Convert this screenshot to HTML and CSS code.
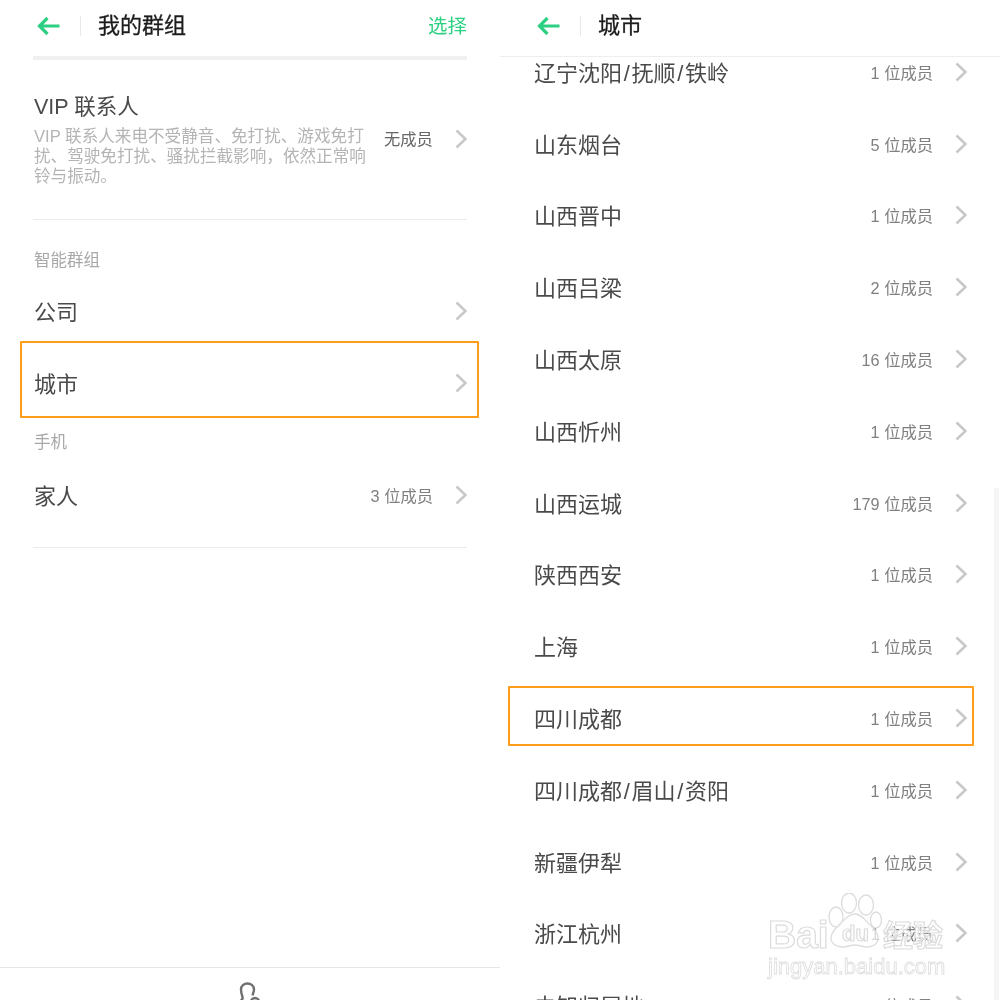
FILE: index.html
```html
<!DOCTYPE html>
<html lang="zh-CN">
<head>
    <meta charset="UTF-8">
    <title>我的群组</title>
    <link rel="stylesheet" href="styles.css">
</head>
<body>
    <div class="page">
        <!-- Left screen: group list -->
        <section class="screen">
            <header class="topbar">
                <svg class="back" viewBox="0 0 24 20"><path d="M22.5 10H3M10.5 2L2.5 10l8 8"/></svg>
                <span class="topbar-line"></span>
                <h1>我的群组</h1>
                <span class="select">选择</span>
            </header>
            <div class="thick-rule"></div>

            <div class="vip">
                <div class="vip-text">
                    <div class="vip-title">VIP 联系人</div>
                    <p>VIP 联系人来电不受静音、免打扰、游戏免打扰、驾驶免打扰、骚扰拦截影响，依然正常响铃与振动。</p>
                </div>
                <span class="count">无成员</span>
                <svg class="chev" viewBox="0 0 12 20"><path d="M1.5 1.5L10.5 10l-9 8.5"/></svg>
            </div>
            <div class="rule"></div>

            <div class="label label-first">智能群组</div>
            <div class="row"><span class="name">公司</span><svg class="chev" viewBox="0 0 12 20"><path d="M1.5 1.5L10.5 10l-9 8.5"/></svg></div>
            <div class="row"><span class="name">城市</span><svg class="chev" viewBox="0 0 12 20"><path d="M1.5 1.5L10.5 10l-9 8.5"/></svg></div>
            <div class="label label-second">手机</div>
            <div class="row"><span class="name">家人</span><span class="count">3 位成员</span><svg class="chev" viewBox="0 0 12 20"><path d="M1.5 1.5L10.5 10l-9 8.5"/></svg></div>
            <div class="rule rule-end"></div>

            <footer class="bottombar">
                <svg class="group-icon" viewBox="0 0 28 22"><path d="M2 20c3-1 5-3 4.500-5C5.500 12 5 9.500 5 7.500 5 4 8 1.500 11.500 1.500S18 4 18 7.500c0 2-.8 3.500-1.500 6"/><circle cx="19" cy="20" r="4"/><circle cx="19" cy="20" r="1"/></svg>
            </footer>
            <div class="mark mark-left"></div>
        </section>

        <!-- Right screen: cities -->
        <section class="screen">
            <header class="topbar topbar-over">
                <svg class="back" viewBox="0 0 24 20"><path d="M22.5 10H3M10.5 2L2.5 10l8 8"/></svg>
                <span class="topbar-line"></span>
                <h1>城市</h1>
            </header>
            <div class="city-list" id="cityList"></div>
            <div class="scrollbar"></div>
            <div class="mark mark-right"></div>
            <div class="watermark">
                <span class="wm-bai">Bai</span>
                <svg class="wm-paw" viewBox="0 0 55 56">
                    <ellipse cx="9" cy="24" rx="7" ry="10"/>
                    <ellipse cx="22" cy="10" rx="7.500" ry="10"/>
                    <ellipse cx="39" cy="12" rx="7.500" ry="10"/>
                    <ellipse cx="49" cy="27" rx="5.500" ry="8"/>
                    <path d="M28 21c6 0 9 5 14 10 6 5 9 10 9 14 0 6-5 9-11 9-4 0-8-2-12-2s-8 2-12 2c-6 0-12-3-12-9 0-5 4-9 9-14 5-5 9-10 15-10z"/>
                </svg>
                <span class="wm-du">du</span>
                <span class="wm-cn">经验</span>
                <span class="wm-url">jingyan.baidu.com</span>
            </div>
        </section>
    </div>

    <script>
        // City rows
        const cities = [
            ['辽宁沈阳/抚顺/铁岭', 1], ['山东烟台', 5], ['山西晋中', 1], ['山西吕梁', 2],
            ['山西太原', 16], ['山西忻州', 1], ['山西运城', 179], ['陕西西安', 1],
            ['上海', 1], ['四川成都', 1], ['四川成都/眉山/资阳', 1], ['新疆伊犁', 1],
            ['浙江杭州', 1], ['未知归属地', 1]
        ];
        const list = document.getElementById('cityList');
        cities.forEach(city => {
            const name = city[0].replace(/\//g, '<span class="slash">/</span>');
            const row = document.createElement('div');
            row.classList.add('city-row');
            row.innerHTML = `
                <span class="name">${name}</span>
                <span class="count">${city[1]} 位成员</span>
                <svg class="chev" viewBox="0 0 12 20"><path d="M1.5 1.5L10.5 10l-9 8.5"/></svg>
            `;
            list.appendChild(row);
        });
    </script>
</body>
</html>
```

FILE: styles.css
```css
* {
    box-sizing: border-box;
}

body {
    margin: 0;
    background-color: #fff;
    font-family: "Liberation Sans", "Noto Sans CJK SC", sans-serif;
    color: #4a4a4a;
}

.page {
    display: flex;
    width: 1000px;
    height: 1000px;
    overflow: hidden;
    filter: blur(0.35px);
}

.screen {
    position: relative;
    width: 500px;
    height: 1000px;
    overflow: hidden;
    padding: 0 33px;
}

/* Top bar */
.topbar {
    display: flex;
    align-items: center;
    height: 52px;
}

.topbar-over {
    position: relative;
    z-index: 2;
    height: 57px;
    margin: 0 -33px;
    padding: 0 33px 5px;
    background-color: #fff;
    border-bottom: 1px solid #eee;
}

.back {
    width: 24px;
    height: 20px;
    margin-left: 4px;
    fill: none;
    stroke: #2dd082;
    stroke-width: 3.2;
}

.topbar-line {
    width: 1px;
    height: 20px;
    margin: 0 17px 0 19px;
    background-color: #e8e8e8;
}

h1 {
    margin: 0 0 6px;
    font-size: 22px;
    font-weight: 400;
    color: #1c1c1c;
    -webkit-text-stroke: 0.3px #1c1c1c;
}

.select {
    margin-left: auto;
    padding-bottom: 4px;
    font-size: 19.5px;
    color: #2dd082;
}

.thick-rule {
    height: 4px;
    margin-top: 4px;
    background-color: #f0f0f0;
}

.rule {
    height: 1px;
    background-color: #ececec;
}

.rule-end {
    margin-top: 15px;
}

/* VIP block */
.vip {
    display: flex;
    align-items: center;
    height: 159px;
}

.vip-text {
    width: 338px;
    margin: 0 12px 0 1px;
}

.vip-title {
    font-size: 21.5px;
    line-height: 30px;
    margin-bottom: 5px;
}

.vip p {
    margin: 0;
    font-size: 16.6px;
    line-height: 19.7px;
    color: #b4b4b4;
}

.label {
    margin-left: 1px;
    font-size: 16.5px;
    line-height: 20px;
    color: #a8a8a8;
}

.label-first {
    margin-top: 30px;
    margin-bottom: 6px;
}

.label-second {
    margin-top: 12px;
    margin-bottom: 8px;
}

/* Rows */
.row,
.city-row {
    display: flex;
    align-items: center;
    height: 72px;
    font-size: 22px;
}

.name {
    margin-left: 1px;
    padding-bottom: 4px;
}

.slash {
    display: inline-block;
    width: 9.5px;
    text-align: center;
}

.city-list {
    margin-top: -20px;
}

.city-row {
    height: 71.8px;
}

.count {
    margin-left: auto;
    padding-bottom: 2px;
    font-size: 16.3px;
    color: #808080;
}

.vip .count {
    margin-left: 0;
    padding-bottom: 4px;
    color: #666;
}

.chev {
    flex: none;
    width: 12px;
    height: 20px;
    margin-left: auto;
    margin-bottom: 2px;
    fill: none;
    stroke: #c8c8c8;
    stroke-width: 2.6;
}

.count + .chev {
    margin-left: 22px;
}

/* Bottom bar */
.bottombar {
    position: absolute;
    left: 0;
    right: 0;
    top: 967px;
    height: 33px;
    border-top: 1px solid #e6e6e6;
    display: flex;
    justify-content: center;
}

.group-icon {
    width: 28px;
    height: 22px;
    margin-top: 14px;
    fill: none;
    stroke: #707070;
    stroke-width: 2.4;
}

/* Orange annotation boxes */
.mark {
    position: absolute;
    border: 2px solid #ff9c1a;
    border-radius: 1px;
}

.mark-left {
    left: 20px;
    top: 341px;
    width: 459px;
    height: 77px;
}

.mark-right {
    left: 8px;
    top: 686px;
    width: 466px;
    height: 60px;
}

.scrollbar {
    position: absolute;
    right: 1px;
    top: 488px;
    width: 5px;
    height: 512px;
    background-color: #f5f5f5;
}

/* Watermark */
.watermark {
    position: absolute;
    left: 267px;
    top: 892px;
    width: 182px;
    height: 90px;
    font-family: "Liberation Sans", sans-serif;
    font-weight: 700;
    color: rgba(255, 255, 255, 0.7);
    -webkit-text-stroke: 1.2px #dcdcdc;
}

.watermark span {
    position: absolute;
    white-space: nowrap;
}

.wm-bai {
    left: 1px;
    top: 20px;
    font-size: 39px;
    line-height: 46px;
}

.wm-paw {
    position: absolute;
    left: 60px;
    top: 1px;
    width: 55px;
    height: 56px;
    fill: rgba(255, 255, 255, 0.7);
    stroke: #dcdcdc;
    stroke-width: 1.3;
}

.wm-du {
    left: 75px;
    top: 29px;
    font-size: 22px;
    line-height: 26px;
}

.wm-cn {
    left: 116px;
    top: 21px;
    font-family: "Noto Sans CJK SC", sans-serif;
    font-size: 30px;
    line-height: 40px;
}

.wm-url {
    left: 1px;
    top: 62px;
    font-size: 22px;
    line-height: 26px;
    font-weight: 400;
    -webkit-text-stroke: 0.8px #dcdcdc;
}
```
